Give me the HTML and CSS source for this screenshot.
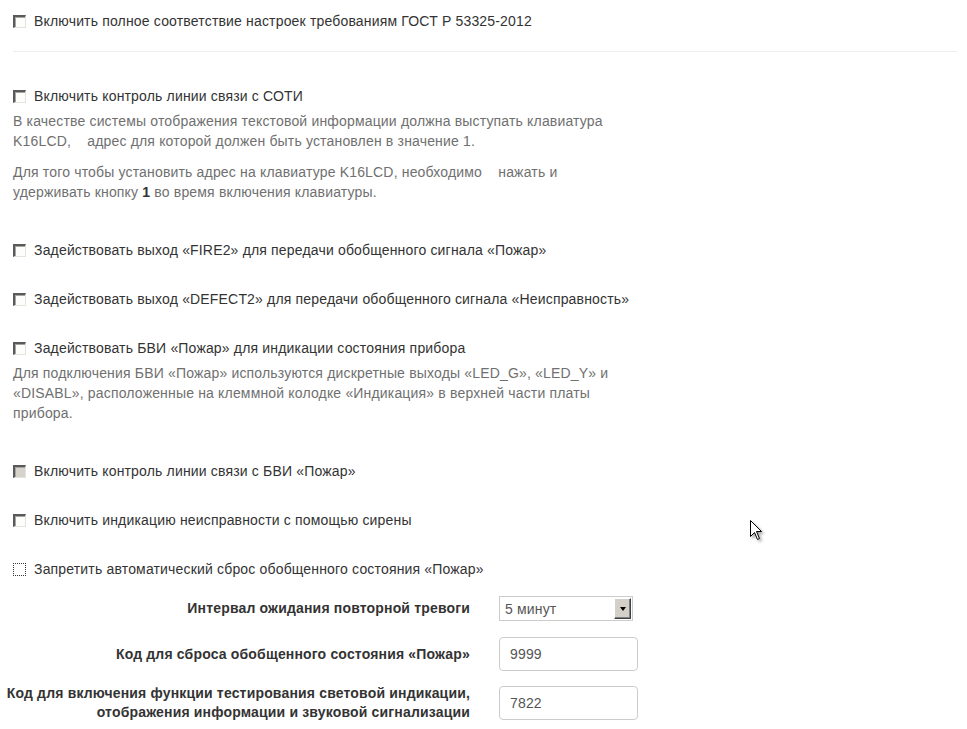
FILE: index.html
```html
<!DOCTYPE html>
<html lang="ru">
<head>
<meta charset="utf-8">
<title>Настройки</title>
<link rel="stylesheet" href="styles.css">
</head>
<body>
<div class="page">
  <div class="options">
    <div class="opt opt-first">
      <label class="chk"><input type="checkbox"><span>Включить полное соответствие настроек требованиям ГОСТ Р 53325-2012</span></label>
    </div>
    <hr class="sep">
    <div class="opt">
      <label class="chk"><input type="checkbox"><span>Включить контроль линии связи с СОТИ</span></label>
      <div class="desc">
        <p>В качестве системы отображения текстовой информации должна выступать клавиатура<br>K16LCD, &nbsp;&nbsp;&nbsp;адрес для которой должен быть установлен в значение 1.</p>
        <p>Для того чтобы установить адрес на клавиатуре K16LCD, необходимо &nbsp;&nbsp;&nbsp;нажать и<br>удерживать кнопку <b>1</b> во время включения клавиатуры.</p>
      </div>
    </div>
    <div class="opt">
      <label class="chk"><input type="checkbox"><span>Задействовать выход «FIRE2» для передачи обобщенного сигнала «Пожар»</span></label>
    </div>
    <div class="opt">
      <label class="chk"><input type="checkbox"><span>Задействовать выход «DEFECT2» для передачи обобщенного сигнала «Неисправность»</span></label>
    </div>
    <div class="opt">
      <label class="chk"><input type="checkbox"><span>Задействовать БВИ «Пожар» для индикации состояния прибора</span></label>
      <div class="desc">
        <p>Для подключения БВИ «Пожар» используются дискретные выходы «LED_G», «LED_Y» и<br>«DISABL», расположенные на клеммной колодке «Индикация» в верхней части платы<br>прибора.</p>
      </div>
    </div>
    <div class="opt">
      <label class="chk"><input type="checkbox" class="is-disabled" disabled><span>Включить контроль линии связи с БВИ «Пожар»</span></label>
    </div>
    <div class="opt">
      <label class="chk"><input type="checkbox"><span>Включить индикацию неисправности с помощью сирены</span></label>
    </div>
    <div class="opt opt-last">
      <label class="chk"><input type="checkbox" class="is-focus"><span>Запретить автоматический сброс обобщенного состояния «Пожар»</span></label>
    </div>
  </div>

  <div class="form">
    <div class="frow frow-select">
      <div class="flabel">Интервал ожидания повторной тревоги</div>
      <div class="select"><span class="select-val">5 минут</span><span class="select-btn"><i></i></span></div>
    </div>
    <div class="frow">
      <div class="flabel">Код для сброса обобщенного состояния «Пожар»</div>
      <input class="field" type="text" value="9999">
    </div>
    <div class="frow">
      <div class="flabel">Код для включения функции тестирования световой индикации,<br>отображения информации и звуковой сигнализации</div>
      <input class="field" type="text" value="7822">
    </div>
  </div>
</div>
<svg class="cursor" width="14" height="22" viewBox="0 0 14 22"><path d="M0.5 0.5 L0.5 16.5 L4.5 12.5 L7.5 19.5 L9.5 18.5 L6.5 11.5 L11.5 11.5 Z" fill="#fff" stroke="#000" stroke-width="1"/></svg>
</body>
</html>
```

FILE: styles.css
```css
html, body {
  margin: 0;
  padding: 0;
  background: #fff;
}
body {
  font-family: "Liberation Sans", Arial, sans-serif;
  font-size: 14px;
  line-height: 20px;
  letter-spacing: 0.17px;
  color: #333;
}
.page {
  position: relative;
  padding-top: 11px;
}
.options {
  padding: 0 10px 0 13px;
}
.opt {
  margin-bottom: 29px;
}
.opt-first {
  margin-bottom: 20px;
}
.opt-last {
  margin-bottom: 17px;
}
.sep {
  border: 0;
  border-top: 1px solid #eee;
  margin: 0 0 34px 0;
  height: 0;
}
.chk {
  display: flex;
  align-items: center;
  gap: 8px;
  height: 20px;
  cursor: default;
}
.chk input {
  appearance: none;
  -webkit-appearance: none;
  margin: 0;
  width: 13px;
  height: 13px;
  box-sizing: border-box;
  background: #fdfdfb;
  border-style: solid;
  border-width: 2px 1px 1px 2px;
  border-color: #5a5a5a #e6e3dc #e6e3dc #5a5a5a;
  box-shadow: inset 1px 1px 0 #a7a59f;
  flex: none;
}
.chk input.is-disabled {
  background: #d6d3cc;
}
.chk input.is-focus {
  border: 1px dotted #333;
  box-shadow: none;
  background: #fff;
}
.desc {
  margin-top: 5px;
  padding-bottom: 9px;
  width: 680px;
  color: #707070;
}
.desc p {
  margin: 0 0 11px 0;
}
.desc p:last-child {
  margin-bottom: 0;
}
.desc b {
  color: #333;
}

.form {
  display: flex;
  flex-direction: column;
  gap: 13px;
}
.frow {
  display: grid;
  grid-template-columns: 470px auto;
  column-gap: 29px;
  align-items: center;
}
.frow-select {
  margin-bottom: 3px;
}
.flabel {
  text-align: right;
  font-weight: bold;
  color: #333;
  line-height: 19px;
}
.select {
  display: flex;
  align-items: center;
  justify-content: space-between;
  width: 134px;
  height: 25px;
  box-sizing: border-box;
  border: 1px solid #ccc;
  padding: 1px 1px 1px 5px;
  color: #555;
  background: #fff;
}
.select-btn {
  width: 17px;
  height: 21px;
  box-sizing: border-box;
  background: #d4d0c8;
  border-style: solid;
  border-width: 1px;
  border-color: #fff #404040 #404040 #fff;
  box-shadow: inset -1px -1px 0 #808080;
  display: flex;
  align-items: center;
  justify-content: center;
}
.select-btn i {
  width: 0;
  height: 0;
  border-left: 3px solid transparent;
  border-right: 3px solid transparent;
  border-top: 4px solid #000;
}
.field {
  width: 139px;
  height: 34px;
  box-sizing: border-box;
  border: 1px solid #ccc;
  border-radius: 4px;
  padding: 0 10px;
  font-family: "Liberation Sans", Arial, sans-serif;
  font-size: 14px;
  letter-spacing: 0.17px;
  color: #555;
  background: #fff;
  outline: none;
}
.cursor {
  position: absolute;
  left: 750px;
  top: 520px;
  filter: drop-shadow(2px 2px 1.5px rgba(0,0,0,0.35));
}
```
